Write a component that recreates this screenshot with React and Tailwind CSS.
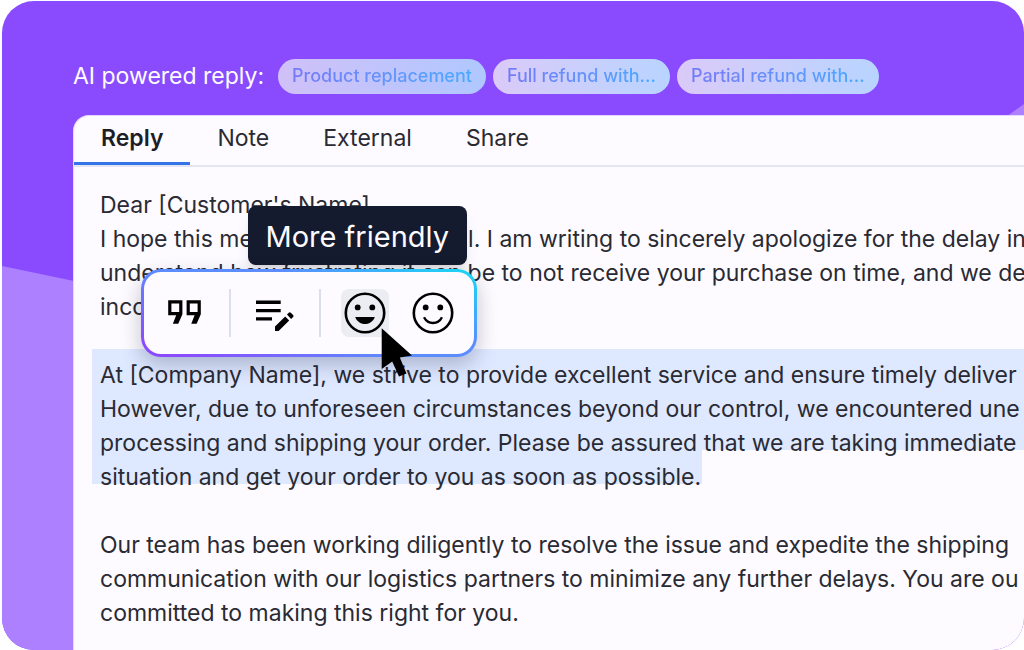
import React, { useState } from 'react';
import clsx from 'clsx';

const tabs = ['Reply', 'Note', 'External', 'Share'];

const suggestions = [
  { label: 'Product replacement', pill: 'from-[#d0c0f8] to-[#afc8ff]' },
  { label: 'Full refund with...', pill: 'from-[#dacaf8] to-[#b8d4ff]' },
  { label: 'Partial refund with...', pill: 'from-[#dacaf8] to-[#b8d4ff]' },
];

const QuoteIcon = () => (
  <svg width="34" height="26" viewBox="0 0 34 26" fill="none" stroke="currentColor" strokeWidth="3.2" aria-hidden="true">
    <path d="M1.8 1.8H12.8V14L9.2 22.2H7.2L10.6 13.6H1.8Z" />
    <path d="M20.2 1.8H31.2V14L27.6 22.2H25.6L29 13.6H20.2Z" />
  </svg>
);

const RewriteIcon = () => (
  <svg width="38" height="36" viewBox="0 0 38 36" fill="currentColor" aria-hidden="true">
    <path d="M0 5.6H24.7V8.9H0ZM0 14H24.7V17.3H0ZM0 22.3H16V25.6H0Z" />
    <path d="M19 36V31.6L29.2 21.4L33.2 25.4L22.6 36Z" />
    <path d="M31 19.6L32.8 17.8Q33.8 16.9 34.8 17.8L37.1 20.1Q38 21.1 37.1 22.1L35.1 23.9Z" />
  </svg>
);

const GrinIcon = () => (
  <svg width="42" height="42" viewBox="0 0 42 42" aria-hidden="true">
    <circle cx="21" cy="21" r="19.2" fill="none" stroke="currentColor" strokeWidth="2.6" />
    <circle cx="13.7" cy="15.4" r="2.9" fill="currentColor" />
    <circle cx="28.3" cy="15.4" r="2.9" fill="currentColor" />
    <path d="M11.2 25H30.8C29.3 29.3 25.6 32 21 32S12.7 29.3 11.2 25Z" fill="currentColor" />
  </svg>
);

const SmileIcon = () => (
  <svg width="42" height="42" viewBox="0 0 42 42" aria-hidden="true">
    <circle cx="21" cy="21" r="19.2" fill="none" stroke="currentColor" strokeWidth="2.6" />
    <circle cx="13.7" cy="15.4" r="2.9" fill="currentColor" />
    <circle cx="28.3" cy="15.4" r="2.9" fill="currentColor" />
    <path d="M12 25.2C14 29 17.2 31 21 31S28 29 30 25.2" fill="none" stroke="currentColor" strokeWidth="2.4" />
  </svg>
);

const ToolButton = ({ label, active, children }) => (
  <button
    aria-label={label}
    className={clsx('size-12 flex items-center justify-center rounded-lg text-black', active && 'bg-[#ecedf3]')}
  >
    {children}
  </button>
);

const Divider = () => <span className="w-[2px] h-12 bg-[#dcdeeb]" />;

const ToneToolbar = () => (
  <div className="absolute left-[67px] top-[39px] flex flex-col gap-1">
    <div className="self-end mr-[10px] px-[18px] pt-[13px] pb-[11px] rounded-lg bg-[#151b2e] text-[#fdfbff] text-[29px] leading-[35px] shadow-lg">
      More friendly
    </div>
    <div className="rounded-[20px] p-[3px] bg-linear-[20deg,#8a4bff_8%,#5b8dff_45%,#5b8dff_65%,#1fd0f5_95%] shadow-[0_8px_20px_rgba(20,25,60,0.25)]">
      <div className="flex items-center gap-5 p-[17px] rounded-[17px] bg-[#fdfbff]">
        <ToolButton label="Quote"><QuoteIcon /></ToolButton>
        <Divider />
        <ToolButton label="Rewrite"><RewriteIcon /></ToolButton>
        <Divider />
        <ToolButton label="More friendly" active><GrinIcon /></ToolButton>
        <ToolButton label="Friendly"><SmileIcon /></ToolButton>
      </div>
    </div>
    {/* Pointer */}
    <svg className="absolute left-[240px] top-[122px]" width="32" height="50" viewBox="0 0 32 50" aria-hidden="true">
      <path d="M0.7 0.2L31 27.6L18.8 29.6L25.5 45.5L18 48.5L11.2 33.4L0.7 41Z" fill="black" />
    </svg>
  </div>
);

const App = () => {
  const [activeTab, setActiveTab] = useState('Reply');

  return (
    <div className="h-screen bg-white pl-[2px] pt-px font-['Inter',sans-serif]">
      <main className="relative isolate h-full flex flex-col overflow-hidden rounded-[32px] bg-[#8a4bff]">
        {/* Backdrop wave */}
        <svg className="absolute inset-0 -z-10 size-full" viewBox="0 0 1022 649" preserveAspectRatio="none" aria-hidden="true">
          <path d="M0 265L72 280C400 360 760 280 1008 113L1022 103V649H0Z" fill="#ad80ff" />
        </svg>

        {/* Suggestions */}
        <div className="flex items-center gap-[14px] pl-[71px] pt-[58px] pb-[21px] whitespace-nowrap">
          <span className="text-[23px] leading-8 pb-[2px] text-[#fdfbff]">AI powered reply:</span>
          <div className="flex gap-[7px]">
            {suggestions.map(({ label, pill }) => (
              <button key={label} className={clsx('h-[35px] px-[14px] rounded-full bg-linear-to-r', pill)}>
                <span className="block text-[18px] leading-8 pb-[2px] font-medium bg-linear-to-r from-[#747af8] to-[#48aaff] bg-clip-text text-transparent">
                  {label}
                </span>
              </button>
            ))}
          </div>
        </div>

        {/* Editor */}
        <section className="flex-1 ml-[71px] rounded-tl-2xl border-l border-t border-[#e4d6ff] bg-[#fdfbff] text-[#2a2a33]">
          <nav className="flex border-b-2 border-[#e3e6f0]">
            {tabs.map((tab) => (
              <button
                key={tab}
                onClick={() => setActiveTab(tab)}
                className={clsx(
                  'px-[27px] pt-1 pb-[6px] text-[23px] leading-9 border-b-3',
                  tab === activeTab ? 'font-semibold text-[#1e1e26] border-[#3474e8]' : 'border-transparent'
                )}
              >
                {tab}
              </button>
            ))}
          </nav>

          <div className="relative isolate px-[26px] pt-[21px] text-[23px] leading-[34px] whitespace-nowrap">
            <p>
              Dear [Customer's Name],<br />
              I hope this message finds you well. I am writing to sincerely apologize for the delay in<br />
              understand how frustrating it can be to not receive your purchase on time, and we de<br />
              inconvenience.
            </p>
            <div className="relative mt-[34px]">
              {/* Selection */}
              <div className="absolute -z-10 -top-[9px] -left-2 -right-[26px]">
                <div className="h-[101px] bg-[#dee8ff]" />
                <div className="h-[34px] w-[610px] bg-[#dee8ff]" />
              </div>
              <p>
                At [Company Name], we strive to provide excellent service and ensure timely deliver<br />
                However, due to unforeseen circumstances beyond our control, we encountered une<br />
                processing and shipping your order. Please be assured that we are taking immediate<br />
                situation and get your order to you as soon as possible.
              </p>
            </div>
            <p className="mt-[34px]">
              Our team has been working diligently to resolve the issue and expedite the shipping<br />
              communication with our logistics partners to minimize any further delays. You are ou<br />
              committed to making this right for you.
            </p>
            <ToneToolbar />
          </div>
        </section>
      </main>
    </div>
  );
};

export default App;
